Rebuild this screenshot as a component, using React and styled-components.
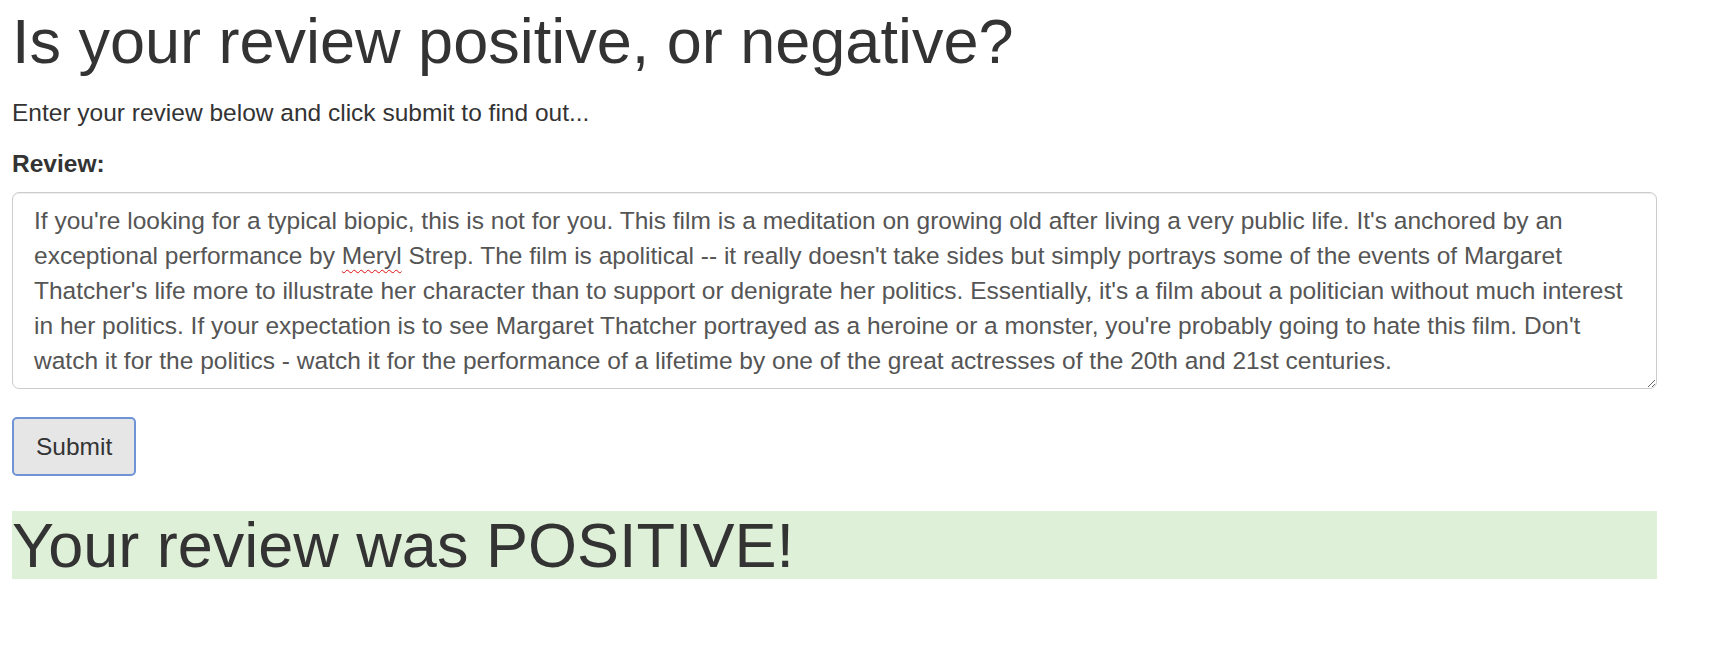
import React from "react";
import styled, { createGlobalStyle } from "styled-components";

const Global = createGlobalStyle`
  html, body {
    margin: 0;
    padding: 0;
    background: #fff;
  }
  body {
    font-family: "Liberation Sans", Arial, Helvetica, sans-serif;
    color: #333;
  }
  * { box-sizing: border-box; }
`;

const Page = styled.main`
  width: 1645px;
  margin-left: 12px;
  padding-top: 7px;
`;

const Title = styled.h1`
  margin: 0 0 19px;
  font-size: 63px;
  line-height: 69px;
  font-weight: 400;
  color: #333;
`;

const Lead = styled.p`
  margin: 0 0 16px;
  font-size: 24.5px;
  line-height: 35px;
`;

const FormGroup = styled.div`
  margin-bottom: 28px;
`;

const Label = styled.label`
  display: block;
  margin-bottom: 11px;
  font-size: 24.5px;
  line-height: 35px;
  font-weight: 700;
`;

const ReviewBox = styled.div`
  display: block;
  width: 100%;
  height: 197px;
  padding: 10px 20px 10px 21px;
  border: 1px solid #ccc;
  border-radius: 7px;
  box-shadow: inset 0 1px 1px rgba(0, 0, 0, 0.075);
  background: #fff;
  color: #555;
  font-size: 24.5px;
  line-height: 35px;
  overflow: auto;
  resize: vertical;
`;

const Misspelt = styled.span`
  text-decoration-line: underline;
  text-decoration-style: wavy;
  text-decoration-color: #e01010;
  text-decoration-thickness: 1px;
  text-decoration-skip-ink: none;
  text-underline-offset: 5px;
`;

const SubmitButton = styled.button`
  display: inline-block;
  height: 59px;
  padding: 0 22px;
  border: 2px solid #6f93d5;
  border-radius: 5px;
  background: #e6e6e6;
  color: #333;
  font-family: inherit;
  font-size: 24.5px;
  line-height: 35px;
  cursor: pointer;
`;

const Result = styled.h1`
  margin: 35px 0 0;
  height: 68px;
  background: ${(p) => (p.$positive ? "#dff0d8" : "#f2dede")};
  color: #333;
  font-size: 63px;
  line-height: 68px;
  font-weight: 400;
`;

export default function App() {
  return (
    <>
      <Global />
      <Page>
        <Title>Is your review positive, or negative?</Title>
        <Lead>Enter your review below and click submit to find out...</Lead>
        <form onSubmit={(e) => e.preventDefault()}>
          <FormGroup>
            <Label htmlFor="review">Review:</Label>
            <ReviewBox id="review" role="textbox" aria-multiline="true">
              If you're looking for a typical biopic, this is not for you. This film is a meditation on growing old after living a very public life. It's anchored by an exceptional performance by <Misspelt>Meryl</Misspelt> Strep. The film is apolitical -- it really doesn't take sides but simply portrays some of the events of Margaret Thatcher's life more to illustrate her character than to support or denigrate her politics. Essentially, it's a film about a politician without much interest in her politics. If your expectation is to see Margaret Thatcher portrayed as a heroine or a monster, you're probably going to hate this film. Don't watch it for the politics - watch it for the performance of a lifetime by one of the great actresses of the 20th and 21st centuries.
            </ReviewBox>
          </FormGroup>
          <SubmitButton type="submit">Submit</SubmitButton>
        </form>
        <Result $positive>Your review was POSITIVE!</Result>
      </Page>
    </>
  );
}
